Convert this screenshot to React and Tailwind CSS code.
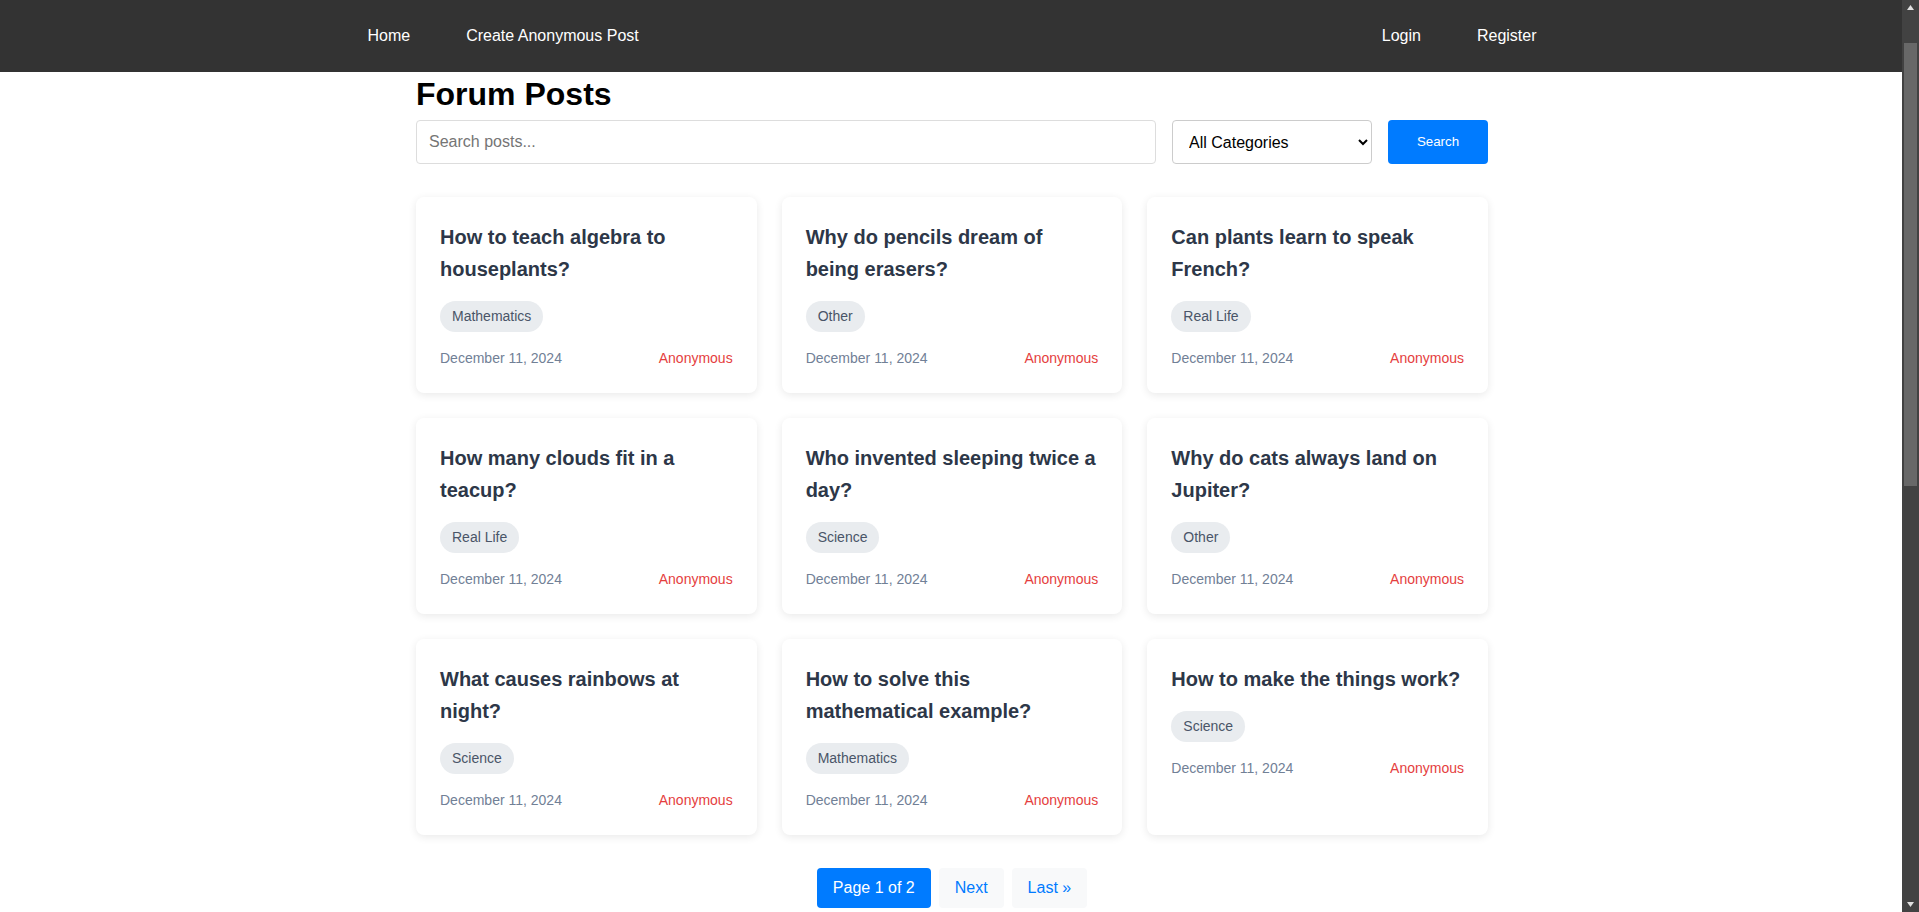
import { useEffect } from 'react';

const posts = [
  { title: 'How to teach algebra to houseplants?', category: 'Mathematics' },
  { title: 'Why do pencils dream of being erasers?', category: 'Other' },
  { title: 'Can plants learn to speak French?', category: 'Real Life' },
  { title: 'How many clouds fit in a teacup?', category: 'Real Life' },
  { title: 'Who invented sleeping twice a day?', category: 'Science' },
  { title: 'Why do cats always land on Jupiter?', category: 'Other' },
  { title: 'What causes rainbows at night?', category: 'Science' },
  { title: 'How to solve this mathematical example?', category: 'Mathematics' },
  { title: 'How to make the things work?', category: 'Science' },
];

function PostCard({ post }) {
  return (
    <div className="bg-white rounded-lg shadow-[0_2px_8px_rgba(0,0,0,0.09)] p-6">
      <h3 className="text-[20px] leading-[32px] font-bold text-[#2d3748] mb-4">{post.title}</h3>
      <span className="inline-block bg-[#e9ecef] text-[#4a5568] text-[14px] leading-[21px] px-3 py-[5px] rounded-full mb-4">
        {post.category}
      </span>
      <div className="flex justify-between items-center text-[14px] leading-[21px]">
        <span className="text-[#718096]">December 11, 2024</span>
        <span className="text-[#e53e3e]">Anonymous</span>
      </div>
    </div>
  );
}

// the dark page scrollbar seen on the right of the window
function ScrollBar() {
  return (
    <div className="sticky top-0 self-start h-screen w-[17px] bg-[#424242] flex flex-col items-center">
      <svg width="17" height="17" viewBox="0 0 17 17" className="shrink-0">
        <path d="M5 10 L8.5 5 L12 10 Z" fill="#e0e0e0" />
      </svg>
      <div className="w-[13px] h-[443px] mt-[26px] bg-[#686868]" />
      <div className="flex-1" />
      <svg width="17" height="17" viewBox="0 0 17 17" className="shrink-0">
        <path d="M5 7 L8.5 12 L12 7 Z" fill="#e0e0e0" />
      </svg>
    </div>
  );
}

export default function App() {
  useEffect(() => {
    document.title = 'Forum Posts';
  }, []);

  return (
    <div className="flex min-h-[1750px] bg-white font-['Liberation_Sans',Arial,sans-serif]">
      <div className="flex-1 min-w-0 bg-[#333333]">
        <nav className="bg-[#333333] h-[72px] pl-[2px]">
          <div className="w-[1169px] mx-auto h-full flex items-center justify-between text-white text-[16px]">
            <div className="flex gap-14">
              <a href="#">Home</a>
              <a href="#">Create Anonymous Post</a>
            </div>
            <div className="flex gap-14">
              <a href="#">Login</a>
              <a href="#">Register</a>
            </div>
          </div>
        </nav>

        <div className="bg-white pl-[2px] min-h-[1678px]">
          <main className="w-[1072px] mx-auto pt-1">
            <h1 className="text-[32px] leading-[37px] font-bold text-black mb-[7px]">Forum Posts</h1>

            <div className="flex gap-4 mb-[33px]">
              <input
                type="text"
                placeholder="Search posts..."
                className="flex-1 h-[44px] border border-[#dddddd] rounded px-3 text-[16px] text-black bg-white placeholder:text-[#757575] outline-none"
              />
              <select className="w-[200px] h-[44px] border border-[#cccccc] rounded pl-3 pr-2 text-[16px] text-black bg-white">
                <option>All Categories</option>
                <option>Mathematics</option>
                <option>Science</option>
                <option>Real Life</option>
                <option>Other</option>
              </select>
              <button className="w-[100px] h-[44px] bg-[#007bff] text-white text-[13.33px] rounded">Search</button>
            </div>

            <div className="grid grid-cols-3 gap-[25px]">
              {posts.map((post, idx) => (
                <PostCard key={idx} post={post} />
              ))}
            </div>

            <div className="flex justify-center gap-2 mt-[33px]">
              <button className="h-[40px] px-4 bg-[#007bff] text-white text-[16px] rounded">Page 1 of 2</button>
              <button className="h-[40px] px-4 bg-[#f8f9fa] text-[#007bff] text-[16px] rounded">Next</button>
              <button className="h-[40px] px-4 bg-[#f8f9fa] text-[#007bff] text-[16px] rounded">Last »</button>
            </div>
          </main>
        </div>
      </div>
      <ScrollBar />
    </div>
  );
}
